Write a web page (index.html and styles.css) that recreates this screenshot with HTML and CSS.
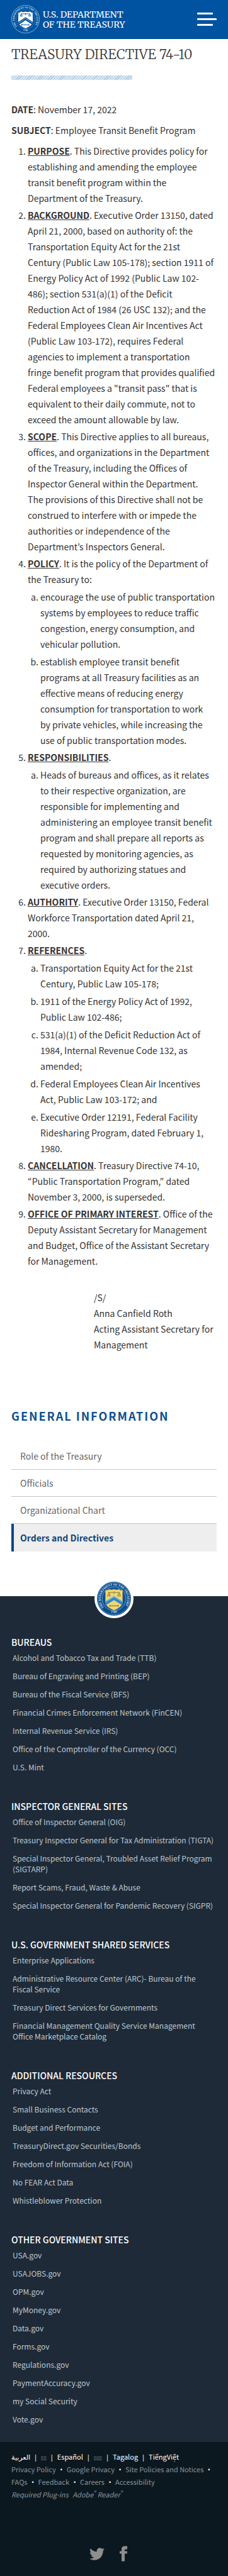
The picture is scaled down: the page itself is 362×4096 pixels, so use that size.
FILE: index.html
```html
<!DOCTYPE html>
<html lang="en">
<head>
<meta charset="utf-8">
<meta name="viewport" content="width=device-width, initial-scale=1">
<title>Treasury Directive 74-10</title>
<link rel="stylesheet" href="styles.css">
</head>
<body>
<header class="site-header">
  <a class="brand" href="#">
    <svg class="brand-seal" viewBox="0 0 100 100" aria-hidden="true">
      <defs>
        <path id="ring-top" d="M20.500 75.800 A39 39 0 1 1 79.500 75.800"/>
        <path id="ring-bottom" d="M30 87.500 A46 46 0 0 0 70 87.500"/>
      </defs>
      <circle cx="50" cy="50" r="49" fill="none" stroke="#8fb9df" stroke-width="2"/>
      <circle cx="50" cy="50" r="34" fill="none" stroke="#6fa3d3" stroke-width="1"/>
      <text class="ring-text"><textPath href="#ring-top">THE DEPARTMENT OF THE TREASURY</textPath></text>
      <text class="ring-text"><textPath href="#ring-bottom" startOffset="50%" text-anchor="middle">1789</textPath></text>
      <path d="M25 27 Q31 28 34 23 Q42 27 50 23 Q58 27 66 23 Q69 28 75 27 L76 60 Q74 73 50 82 Q26 73 24 60 Z" fill="#fff"/>
      <path d="M50 43 L76 60 L76 71 L50 54 L24 71 L24 60 Z" fill="#0053a0"/>
      <path d="M50 47 L75 63.500 M50 47 L25 63.500" stroke="#cfe2f3" stroke-width="1.500"/>
      <path d="M34 31 H66 M50 28 V35 M35 31 L31 39 H39 Z M65 31 L61 39 H69 Z M35 70 H62 M62 67 V73 M37 67 V73" fill="none" stroke="#0053a0" stroke-width="2"/>
    </svg>
    <span class="brand-name">U.S. DEPARTMENT<br>OF THE TREASURY</span>
  </a>
  <button class="menu-button" type="button" aria-label="Menu">
    <span class="menu-line"></span><span class="menu-line menu-line-long"></span><span class="menu-line"></span>
  </button>
</header>

<main class="content">
  <h1 class="title">TREASURY DIRECTIVE 74-10</h1>
  <div class="stripe"></div>

  <article class="directive">
    <p><strong>DATE</strong>: November 17, 2022</p>
    <p><strong>SUBJECT</strong>: Employee Transit Benefit Program</p>
    <ol class="sections">
      <li><strong class="term">PURPOSE</strong>. This Directive provides policy for establishing and amending the employee transit benefit program within the Department of the Treasury.</li>
      <li><strong class="term">BACKGROUND</strong>. Executive Order 13150, dated April 21, 2000, based on authority of: the Transportation Equity Act for the 21st Century&nbsp;(Public Law 105-178); section 1911 of Energy Policy Act of 1992 (Public Law 102-486); section 531(a)(1) of the Deficit Reduction Act of 1984 (26 USC 132); and the Federal Employees Clean Air Incentives Act (Public Law 103-172), requires Federal agencies to implement a transportation fringe benefit program that provides qualified Federal employees a "transit pass" that is equivalent to their daily commute, not to exceed the amount allowable by law.</li>
      <li><strong class="term">SCOPE</strong>. This Directive applies to all bureaus, offices, and organizations in the Department of the Treasury, including the Offices of Inspector General within the Department. The provisions of this Directive shall not be construed to interfere with or impede the authorities or independence of the Department’s Inspectors General.</li>
      <li><strong class="term">POLICY</strong>. It is the policy of the Department of the Treasury to:
        <ol class="clauses">
          <li>encourage the use of public transportation systems by employees to reduce traffic congestion, energy consumption, and vehicular pollution.</li>
          <li>establish employee transit benefit programs at all Treasury facilities as an effective means of reducing energy consumption for transportation to work by&nbsp;private vehicles, while increasing the use of public transportation modes.</li>
        </ol>
      </li>
      <li><strong class="term">RESPONSIBILITIES</strong>.
        <ol class="clauses">
          <li>Heads of bureaus and offices, as it relates to their respective organization, are responsible for implementing and administering an employee transit benefit program and shall prepare all reports as requested by monitoring agencies, as required by authorizing statues and executive orders.</li>
        </ol>
      </li>
      <li><strong class="term">AUTHORITY</strong>. Executive Order 13150, Federal Workforce Transportation dated April 21, 2000.</li>
      <li><strong class="term">REFERENCES</strong>.
        <ol class="clauses">
          <li>Transportation Equity Act for the 21st Century, Public Law 105-178;</li>
          <li>1911 of the Energy Policy Act of 1992, Public Law 102-486;</li>
          <li>531(a)(1) of the Deficit Reduction Act of 1984, Internal Revenue Code 132, as amended;</li>
          <li>Federal Employees Clean Air Incentives Act,&nbsp;Public Law 103-172; and</li>
          <li>Executive Order 12191, Federal Facility Ridesharing Program, dated February 1, 1980.</li>
        </ol>
      </li>
      <li><strong class="term">CANCELLATION</strong>. Treasury Directive 74-10, “Public Transportation Program,” dated November 3, 2000, is superseded.</li>
      <li><strong class="term">OFFICE OF PRIMARY INTEREST</strong>. Office of the Deputy Assistant Secretary for Management and Budget, Office of the Assistant Secretary for Management.</li>
    </ol>
    <p class="signature">/S/<br>Anna Canfield Roth<br>Acting Assistant Secretary for Management</p>
  </article>

  <nav class="section-nav" aria-labelledby="nav-title">
    <h2 class="nav-title" id="nav-title">GENERAL INFORMATION</h2>
    <ul class="nav-list">
      <li><a class="nav-link" href="#">Role of the Treasury</a></li>
      <li><a class="nav-link" href="#">Officials</a></li>
      <li><a class="nav-link" href="#">Organizational Chart</a></li>
      <li><a class="nav-link nav-link-active" href="#" aria-current="page">Orders and Directives</a></li>
    </ul>
  </nav>
</main>

<footer>
  <div class="footer-main">
    <div class="footer-seal">
      <svg viewBox="0 0 100 100" aria-hidden="true">
        <circle cx="50" cy="50" r="50" fill="#0c4c8c"/>
        <circle cx="50" cy="50" r="47.500" fill="none" stroke="#6d9cc8" stroke-width="1.500"/>
        <circle cx="50" cy="50" r="35" fill="#12508f" stroke="#8db4d6" stroke-width="1.500"/>
        <text class="ring-text"><textPath href="#ring-top">THE DEPARTMENT OF THE TREASURY</textPath></text>
        <text class="ring-text"><textPath href="#ring-bottom" startOffset="50%" text-anchor="middle">1789</textPath></text>
        <path d="M25 25 Q32 27 35 22 Q43 26 50 22 Q57 26 65 22 Q68 27 75 25 L75 62 Q73 75 50 84 Q27 75 25 62 Z" fill="#ecd873" stroke="#c9a94a" stroke-width="1"/>
        <path d="M50 42 L75 58 L75 70 L50 54 L25 70 L25 58 Z" fill="#2f86cc"/>
        <path d="M25 60 L50 44 L75 60" fill="none" stroke="#8cc4ea" stroke-width="2"/>
        <path d="M34 32 H66 M50 28 V36 M35 32 L31 42 H39 Z M65 32 L61 42 H69 Z M36 71 H64 M62 68 V74 M38 68 V74" fill="none" stroke="#8a7d45" stroke-width="2"/>
      </svg>
    </div>

    <section class="footer-group">
      <h3>BUREAUS</h3>
      <ul>
        <li><a href="#">Alcohol and Tobacco Tax and Trade (TTB)</a></li>
        <li><a href="#">Bureau of Engraving and Printing (BEP)</a></li>
        <li><a href="#">Bureau of the Fiscal Service (BFS)</a></li>
        <li><a href="#">Financial Crimes Enforcement Network (FinCEN)</a></li>
        <li><a href="#">Internal Revenue Service (IRS)</a></li>
        <li><a href="#">Office of the Comptroller of the Currency (OCC)</a></li>
        <li><a href="#">U.S. Mint</a></li>
      </ul>
    </section>
    <section class="footer-group">
      <h3>INSPECTOR GENERAL SITES</h3>
      <ul>
        <li><a href="#">Office of Inspector General (OIG)</a></li>
        <li><a href="#">Treasury Inspector General for Tax Administration (TIGTA)</a></li>
        <li><a href="#">Special Inspector General, Troubled Asset Relief Program (SIGTARP)</a></li>
        <li><a href="#">Report Scams, Fraud, Waste &amp; Abuse</a></li>
        <li><a href="#">Special Inspector General for Pandemic Recovery (SIGPR)</a></li>
      </ul>
    </section>
    <section class="footer-group">
      <h3>U.S. GOVERNMENT SHARED SERVICES</h3>
      <ul>
        <li><a href="#">Enterprise Applications</a></li>
        <li><a href="#">Administrative Resource Center (ARC)- Bureau of the Fiscal Service</a></li>
        <li><a href="#">Treasury Direct Services for Governments</a></li>
        <li><a href="#">Financial Management Quality Service Management Office Marketplace Catalog</a></li>
      </ul>
    </section>
    <section class="footer-group">
      <h3>ADDITIONAL RESOURCES</h3>
      <ul>
        <li><a href="#">Privacy Act</a></li>
        <li><a href="#">Small Business Contacts</a></li>
        <li><a href="#">Budget and Performance</a></li>
        <li><a href="#">TreasuryDirect.gov Securities/Bonds</a></li>
        <li><a href="#">Freedom of Information Act (FOIA)</a></li>
        <li><a href="#">No FEAR Act Data</a></li>
        <li><a href="#">Whistleblower Protection</a></li>
      </ul>
    </section>
    <section class="footer-group">
      <h3>OTHER GOVERNMENT SITES</h3>
      <ul>
        <li><a href="#">USA.gov</a></li>
        <li><a href="#">USAJOBS.gov</a></li>
        <li><a href="#">OPM.gov</a></li>
        <li><a href="#">MyMoney.gov</a></li>
        <li><a href="#">Data.gov</a></li>
        <li><a href="#">Forms.gov</a></li>
        <li><a href="#">Regulations.gov</a></li>
        <li><a href="#">PaymentAccuracy.gov</a></li>
        <li><a href="#">my Social Security</a></li>
        <li><a href="#">Vote.gov</a></li>
      </ul>
    </section>
  </div>

  <div class="footer-legal">
    <p class="languages"><a href="#" lang="ar">العربية</a> <span class="sep">|</span> <a class="boxes" href="#">▯▯</a> <span class="sep">|</span> <a href="#" lang="es">Español</a> <span class="sep">|</span> <a class="boxes" href="#">▯▯▯</a> <span class="sep">|</span> <a href="#">Tagalog</a> <span class="sep">|</span> <a href="#" lang="vi">TiếngViệt</a></p>
    <p class="policies"><a href="#">Privacy Policy</a> <span class="sep">•</span> <a href="#">Google Privacy</a> <span class="sep">•</span> <a href="#">Site Policies and Notices</a> <span class="sep">•</span> <a href="#">FAQs</a> <span class="sep">•</span> <a href="#">Feedback</a> <span class="sep">•</span> <a href="#">Careers</a> <span class="sep">•</span> <a href="#">Accessibility</a></p>
    <p class="plugins"><span>Required Plug-ins</span> <a href="#">Adobe<sup>®</sup> Reader<sup>®</sup></a></p>
    <div class="social">
      <a href="#" aria-label="Twitter"><svg class="icon-twitter" viewBox="0 0 24 24"><path d="M23.953 4.570a10 10 0 01-2.825.775 4.958 4.958 0 002.163-2.723c-.951.555-2.005.959-3.127 1.184a4.920 4.920 0 00-8.384 4.482C7.690 8.095 4.067 6.130 1.640 3.162a4.822 4.822 0 00-.666 2.475c0 1.710.870 3.213 2.188 4.096a4.904 4.904 0 01-2.228-.616v.060a4.923 4.923 0 003.946 4.827 4.996 4.996 0 01-2.212.085 4.936 4.936 0 004.604 3.417 9.867 9.867 0 01-6.102 2.105c-.390 0-.779-.023-1.170-.067a13.995 13.995 0 007.557 2.209c9.053 0 13.998-7.496 13.998-13.985 0-.210 0-.420-.015-.630A9.935 9.935 0 0024 4.590z"/></svg></a>
      <a href="#" aria-label="Facebook"><svg class="icon-facebook" viewBox="6 0 12 24"><path d="M9 8h-3v4h3v12h5v-12h3.642l.358-4h-4v-1.667c0-.955.192-1.333 1.115-1.333h2.885v-5h-3.808c-3.596 0-5.192 1.583-5.192 4.615v3.385z"/></svg></a>
    </div>
  </div>
</footer>
</body>
</html>
```
FILE: styles.css
```css
* {
  box-sizing: border-box;
}

body {
  margin: 0;
  background: #fff;
  color: #333;
  font-family: "Noto Sans CJK KR", "Open Sans", sans-serif;
  font-size: 14px;
  line-height: 25px;
}

h1, h2, h3, p, ul, ol {
  margin: 0;
  padding: 0;
}

ul {
  list-style: none;
}

a {
  color: inherit;
  text-decoration: none;
}

svg {
  display: block;
}

/* Header */
.site-header {
  display: flex;
  align-items: center;
  justify-content: space-between;
  height: 62px;
  padding: 0 18px;
  background: #0053a0;
  border-bottom: 1px solid #004787;
}

.brand {
  display: flex;
  align-items: center;
  gap: 5px;
  color: #fff;
}

.brand-seal {
  width: 45px;
  height: 45px;
}

.ring-text {
  fill: #dbe9f5;
  font-family: "Liberation Serif", serif;
  font-size: 9px;
  font-weight: 700;
}

.brand-name {
  font-family: Merriweather, "Noto Serif", "Liberation Serif", serif;
  font-size: 14px;
  line-height: 16px;
}

.menu-button {
  display: flex;
  flex-direction: column;
  gap: 6px;
  width: 31px;
  padding: 0;
  border: 0;
  background: none;
}

.menu-line {
  width: 25px;
  height: 3px;
  border-radius: 1px;
  background: #fff;
}

.menu-line-long {
  width: 31px;
}

/* Content */
.content {
  padding: 10px 18px 71px;
}

.title {
  font-family: Merriweather, "Noto Serif", "Liberation Serif", serif;
  font-size: 21px;
  font-weight: 300;
  line-height: 30px;
  white-space: nowrap;
}

.stripe {
  width: 59%;
  height: 7px;
  margin: 18px 0 35px;
  background: repeating-linear-gradient(135deg, #a3c3df 0 1px, #dceaf5 1px 3px);
}

.directive p {
  margin-bottom: 8px;
}

.sections {
  display: grid;
  gap: 2px;
  padding: 0 2px 0 26px;
}

.clauses {
  display: grid;
  gap: 3px;
  margin-top: 3px;
  padding-left: 20px;
  list-style: lower-alpha;
}

.term {
  text-decoration: underline;
}

.directive .signature {
  margin: 33px 0 0 131px;
}

/* Section navigation */
.section-nav {
  margin-top: 88px;
}

.nav-title {
  margin-bottom: 31px;
  color: #0b4f92;
  font-size: 18px;
  font-weight: 700;
  letter-spacing: 2px;
  line-height: 24px;
  white-space: nowrap;
}

.nav-link {
  display: block;
  padding: 9px 14px 8px;
  border-bottom: 1px solid #c4c4c4;
  color: #666;
}

.nav-link-active {
  padding: 10px 10px 9px;
  border-bottom: 0;
  border-left: 4px solid #004785;
  background: #eee;
  color: #14457a;
  font-weight: 700;
}

/* Footer */
.footer-main {
  position: relative;
  display: grid;
  gap: 44px;
  padding: 63px 18px 28px;
  background: #1e2a38;
}

.footer-seal {
  position: absolute;
  top: -27px;
  left: 50%;
  width: 62px;
  height: 62px;
  margin-left: -31px;
  padding: 4px;
  border-radius: 50%;
  background: #fff;
}

.footer-group h3 {
  margin-bottom: 6px;
  color: #fff;
  font-size: 14px;
  font-weight: 500;
  line-height: 20px;
}

.footer-group ul {
  display: grid;
  gap: 12px;
  padding-left: 2px;
  color: #bfc8ce;
  font-size: 12px;
  line-height: 17px;
}

.footer-legal {
  padding: 13px 18px 23px;
  background: #0c1820;
  color: #8b949a;
  font-size: 11px;
  line-height: 20px;
}

.languages {
  color: #fff;
  font-family: "Noto Sans CJK KR", "DejaVu Sans", sans-serif;
}

.boxes {
  color: #8b949a;
  font-family: "DejaVu Sans", sans-serif;
  font-size: 8px;
  line-height: 1;
}

.sep {
  margin: 0 4px;
  color: #fff;
  font-family: "Open Sans", sans-serif;
  line-height: 1;
}

.languages .sep {
  margin: 0 3px;
}

.plugins {
  font-style: italic;
}

.plugins a {
  margin-left: 4px;
}

.plugins sup {
  font-size: 8px;
  line-height: 0;
}

.social {
  display: flex;
  align-items: center;
  justify-content: center;
  gap: 24px;
  height: 25px;
  margin-top: 72px;
  padding-right: 18px;
  fill: #8e8e8c;
}

.icon-twitter {
  width: 24px;
  height: 24px;
}

.icon-facebook {
  width: 12px;
  height: 25px;
}
```
